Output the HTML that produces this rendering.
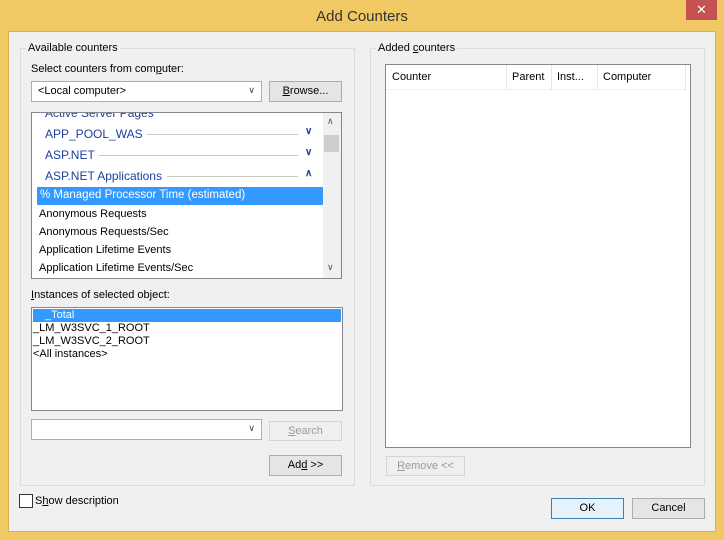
<!DOCTYPE html><html><head><style>
*{margin:0;padding:0;box-sizing:border-box}
body{width:724px;height:540px;background:#f0c864;font-family:"Liberation Sans",sans-serif;font-size:11px;color:#000;position:relative;overflow:hidden}
.a{position:absolute}
#client{left:8px;top:31px;width:708px;height:501px;background:#f0f0f0;border:1px solid #d9b14f}
.grp{border:1px solid #dcdcdc;}
.lbl{background:#f0f0f0;padding:0 2px;white-space:nowrap}
.box{background:#fff;border:1px solid #828790}
.btn{background:#e5e5e5;border:1px solid #acacac;text-align:center;line-height:18px}
.dis{color:#9a9a9a;background:#efefef;border-color:#d5d5d5}
.cat{color:#1e3f9c;font-size:12px;white-space:nowrap}
.line{height:1px;background:#c8c8c8}
.row{white-space:nowrap}
u{text-decoration:underline}
</style></head><body>
<div class="a" style="left:0;width:724px;text-align:center;top:8px;font-size:15px;color:#333">Add Counters</div>
<div class="a" style="left:686px;top:0;width:31px;height:20px;background:#c75050;color:#fff;text-align:center;font-size:13px;line-height:19px">✕</div>
<div class="a" id="client"></div>

<div class="a grp" style="left:20px;top:48px;width:335px;height:438px"></div>
<div class="a lbl" style="left:26px;top:42px">Available counters</div>
<div class="a grp" style="left:370px;top:48px;width:335px;height:438px"></div>
<div class="a lbl" style="left:376px;top:42px">Added <u>c</u>ounters</div>

<div class="a" style="left:31px;top:63px">Select counters from com<u>p</u>uter:</div>
<div class="a box" style="left:31px;top:81px;width:231px;height:21px;border-color:#abadb3;padding:3px 0 0 6px">&lt;Local computer&gt;<span class="a" style="right:6px;top:3px;font-size:9px;color:#444">&#x2228;</span></div>
<div class="a btn" style="left:269px;top:81px;width:73px;height:21px"><u>B</u>rowse...</div>

<div class="a box" style="left:31px;top:112px;width:311px;height:167px;overflow:hidden">
 <div class="a cat" style="left:13px;top:-7px">Active Server Pages</div>
 <div class="a cat" style="left:13px;top:14px">APP_POOL_WAS</div><div class="a line" style="left:115px;top:21px;width:151px"></div><div class="a cat" style="left:273px;top:13px;font-size:10px;font-weight:bold">&#x2228;</div>
 <div class="a cat" style="left:13px;top:35px">ASP.NET</div><div class="a line" style="left:67px;top:42px;width:199px"></div><div class="a cat" style="left:273px;top:34px;font-size:10px;font-weight:bold">&#x2228;</div>
 <div class="a cat" style="left:13px;top:56px">ASP.NET Applications</div><div class="a line" style="left:135px;top:63px;width:131px"></div><div class="a cat" style="left:273px;top:55px;font-size:10px;font-weight:bold">&#x2227;</div>
 <div class="a row" style="left:5px;top:74px;width:286px;height:18px;background:#3399ff;color:#fff;padding:2px 0 0 3px;font-size:11.5px">% Managed Processor Time (estimated)</div>
 <div class="a row" style="left:7px;top:95px">Anonymous Requests</div>
 <div class="a row" style="left:7px;top:113px">Anonymous Requests/Sec</div>
 <div class="a row" style="left:7px;top:131px">Application Lifetime Events</div>
 <div class="a row" style="left:7px;top:149px">Application Lifetime Events/Sec</div>
 <div class="a" style="left:291px;top:0;width:18px;height:165px;background:#f0f0f0"></div>
 <div class="a" style="left:292px;top:22px;width:15px;height:17px;background:#cdcdcd"></div>
 <div class="a" style="left:295px;top:3px;font-size:9px;color:#555">&#x2227;</div>
 <div class="a" style="left:295px;top:149px;font-size:9px;color:#555">&#x2228;</div>
</div>

<div class="a" style="left:31px;top:289px"><u>I</u>nstances of selected object:</div>
<div class="a box" style="left:31px;top:307px;width:312px;height:104px">
 <div class="a" style="left:1px;top:1px;width:308px;height:13px;background:#3399ff;color:#fff;padding-left:12px;line-height:13px">_Total</div>
 <div class="a row" style="left:1px;top:14px;line-height:13px">_LM_W3SVC_1_ROOT</div>
 <div class="a row" style="left:1px;top:27px;line-height:13px">_LM_W3SVC_2_ROOT</div>
 <div class="a row" style="left:1px;top:40px;line-height:13px">&lt;All instances&gt;</div>
</div>
<div class="a box" style="left:31px;top:419px;width:231px;height:21px;border-color:#abadb3"><span class="a" style="right:6px;top:3px;font-size:9px;color:#444">&#x2228;</span></div>
<div class="a btn dis" style="left:269px;top:421px;width:73px;height:20px"><u>S</u>earch</div>
<div class="a btn" style="left:269px;top:455px;width:73px;height:21px">Ad<u>d</u> &gt;&gt;</div>

<div class="a box" style="left:385px;top:64px;width:306px;height:384px">
 <div class="a" style="left:0;top:0;width:300px;height:25px;border-bottom:1px solid #f0f0f0"></div>
 <div class="a" style="left:6px;top:6px">Counter</div>
 <div class="a" style="left:120px;top:0;width:1px;height:25px;background:#e5e5e5"></div>
 <div class="a" style="left:126px;top:6px">Parent</div>
 <div class="a" style="left:165px;top:0;width:1px;height:25px;background:#e5e5e5"></div>
 <div class="a" style="left:171px;top:6px">Inst...</div>
 <div class="a" style="left:211px;top:0;width:1px;height:25px;background:#e5e5e5"></div>
 <div class="a" style="left:217px;top:6px">Computer</div>
 <div class="a" style="left:299px;top:0;width:1px;height:25px;background:#e5e5e5"></div>
</div>
<div class="a btn dis" style="left:386px;top:456px;width:79px;height:20px"><u>R</u>emove &lt;&lt;</div>

<div class="a" style="left:19px;top:494px;width:14px;height:14px;border:1px solid #333;background:#fff"></div>
<div class="a" style="left:35px;top:495px">S<u>h</u>ow description</div>
<div class="a btn" style="left:551px;top:498px;width:73px;height:21px;border-color:#3c7fb1;background:#e5f1fb">OK</div>
<div class="a btn" style="left:632px;top:498px;width:73px;height:21px">Cancel</div>
</body></html>
